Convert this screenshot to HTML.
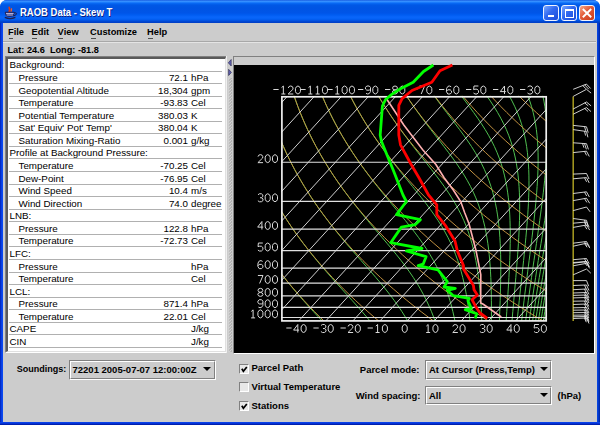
<!DOCTYPE html>
<html><head><meta charset="utf-8">
<style>
*{margin:0;padding:0;box-sizing:border-box}
html,body{width:600px;height:425px;overflow:hidden;background:#fff}
body{position:relative;font-family:"Liberation Sans",sans-serif;}
.abs{position:absolute}
#win{position:absolute;left:0;top:0;width:600px;height:425px;background:#0040d8;border-radius:7px 7px 0 0;overflow:hidden}
#title{position:absolute;left:0;top:0;width:600px;height:23px;
 background:linear-gradient(to bottom,#0a4ad8 0px,#3d95ff 1px,#2a88ff 2px,#0a6cf6 3px,#0058e6 5px,#0054e3 8px,#0055e8 13px,#005df2 15px,#0a66fa 17px,#0462f6 19px,#004edc 21px,#0040c8 22px,#0040c8 23px)}
#ttl{position:absolute;left:20px;top:6px;font-size:10.6px;transform:scaleX(0.895);transform-origin:0 0;font-weight:bold;color:#fff;text-shadow:1px 1px 0 #0a1e80;letter-spacing:0px}
#lframe{position:absolute;left:0;top:23px;width:3px;height:402px;background:linear-gradient(to right,#0020b0 0px,#0636d8 1px,#0a48f0 2px,#0a48f0 3px)}
#rframe{position:absolute;left:596.6px;top:23px;width:3.4px;height:402px;background:linear-gradient(to right,#0848e8,#0030b8 75%,#001a90)}
#bframe{position:absolute;left:0;top:421.8px;width:600px;height:3.2px;background:linear-gradient(to bottom,#0a48f0 0px,#0638e0 1.2px,#0020b0 2.4px,#001898 3.2px)}
#client{position:absolute;left:3px;top:23px;width:594px;height:399px;background:#cccccc}
.menu{position:absolute;top:27px;font-size:9.3px;font-weight:bold;color:#000}
.menu u{text-decoration:none;position:relative}
.menu u:after{content:"";position:absolute;left:0.5px;right:0.5px;top:10.5px;height:1.2px;background:#505050}
.b95{font-size:9.5px;font-weight:bold;color:#000;position:absolute;white-space:nowrap}
#table{position:absolute;left:5px;top:56px;width:222px;height:297px;border-top:1px solid #808080;border-left:1px solid #808080;border-right:1px solid #fff;border-bottom:1px solid #fff}
#table .in{position:absolute;left:0;top:0;right:0;bottom:0;border-top:2px solid #5a5a5a;border-left:2px solid #5a5a5a;border-right:1px solid #e0e0e0;border-bottom:1px solid #e0e0e0;background:#fff;overflow:hidden}
.rows{position:absolute;left:8.5px;top:59px;width:216.5px;height:292px;overflow:hidden}
.row{position:absolute;left:0;width:216px;height:12.57px;font-size:9.8px;color:#000;white-space:nowrap}
.row span{position:absolute;top:1px}
.row .nm{right:36.5px;text-align:right}
.row .un{left:182.5px}
.sep{position:absolute;left:0;width:213px;height:1px;background:#b0b0b0}
.combo{position:absolute;border-top:1px solid #808080;border-left:1px solid #808080;border-right:1px solid #fff;border-bottom:1px solid #fff}
.combo .ci{position:absolute;left:0;top:0;right:0;bottom:0;border-top:1px solid #fff;border-left:1px solid #fff;border-right:1px solid #808080;border-bottom:1px solid #808080}
.arrow{position:absolute;width:0;height:0;border-left:4px solid transparent;border-right:4px solid transparent;border-top:4px solid #000}
.cb{position:absolute;width:10px;height:10px;border-top:1px solid #808080;border-left:1px solid #808080;border-right:1px solid #fff;border-bottom:1px solid #fff;background:#e8e8e8}
.tb{position:absolute;top:4.8px;width:16px;height:16px;border:1px solid #f0f4ff;border-radius:3px}
</style></head><body>
<div id="win">
 <div id="title"></div>
 <div id="ttl">RAOB Data - Skew T</div>
 <!-- java cup icon -->
 <svg class="abs" style="left:0;top:0" width="20" height="22" viewBox="0 0 20 22">
  <path d="M9.6 6.8 C8.2 8.5 11 9.3 9.2 11.2 C8.8 11.7 9.4 12 9.8 12.4" stroke="#e03c10" stroke-width="1.7" fill="none"/>
  <path d="M11.8 8.4 C10.8 9.6 12.2 10.2 10.8 12" stroke="#f06028" stroke-width="1.2" fill="none"/>
  <path d="M5.2 12.2 L14.4 12.2 L13.4 15.8 Q9.8 17.2 6.2 15.8 Z" fill="#3a3a80" stroke="#202050" stroke-width="0.8"/>
  <path d="M6 13.5 L13.6 13.5 M6.6 15 L13 15" stroke="#c8d0f8" stroke-width="0.8"/>
  <path d="M14.4 12.8 Q17.4 12.4 16 14.8 L13.5 16" stroke="#202050" stroke-width="1" fill="none"/>
  <path d="M4.8 17.4 Q10 19.8 15.4 17.4" stroke="#202050" stroke-width="1.2" fill="none"/>
 </svg>
 <div class="tb" style="left:543px;background:linear-gradient(135deg,#7aa8ff,#3068f0 45%,#1a4ad8)"><div class="abs" style="left:3.5px;top:9px;width:6px;height:2.2px;background:#fff"></div></div>
 <div class="tb" style="left:561px;background:linear-gradient(135deg,#7aa8ff,#3068f0 45%,#1a4ad8)"><div class="abs" style="left:3px;top:2.8px;width:9px;height:9px;border:1px solid #fff;border-top-width:2px"></div></div>
 <div class="tb" style="left:579px;background:linear-gradient(135deg,#f8a888,#e25a38 45%,#c83c1c)">
  <svg class="abs" style="left:0;top:0" width="14" height="14"><path d="M2.8 3 L11.2 11.2 M11.2 3 L2.8 11.2" stroke="#fff" stroke-width="1.9"/></svg></div>
 <div id="lframe"></div><div id="rframe"></div><div id="bframe"></div>
 <div id="client"></div>
 <!-- menu -->
 <div class="menu" style="left:8px"><u>F</u>ile</div>
 <div class="menu" style="left:31.5px"><u>E</u>dit</div>
 <div class="menu" style="left:57.5px"><u>V</u>iew</div>
 <div class="menu" style="left:90px"><u>C</u>ustomize</div>
 <div class="menu" style="left:147px"><u>H</u>elp</div>
 <div class="abs" style="left:3px;top:41px;width:593px;height:1px;background:#a8a8a8"></div>
 <div class="abs" style="left:3px;top:42px;width:593px;height:1px;background:#e4e4e4"></div>
 <div class="b95" style="left:7.5px;top:45.4px;font-size:9.2px">Lat: 24.6&nbsp; Long: -81.8</div>
 <!-- table -->
 <div id="table"><div class="in"></div></div>
 <div class="rows">
<div class="row" style="top:-0.57px"><span class="lb" style="left:1px">Background:</span><span class="nm"></span><span class="un"></span></div>
<div class="sep" style="top:11.50px"></div>
<div class="row" style="top:12.00px"><span class="lb" style="left:10px">Pressure</span><span class="nm">72.1</span><span class="un">hPa</span></div>
<div class="sep" style="top:24.07px"></div>
<div class="row" style="top:24.57px"><span class="lb" style="left:10px">Geopotential Altitude</span><span class="nm">18,304</span><span class="un">gpm</span></div>
<div class="sep" style="top:36.64px"></div>
<div class="row" style="top:37.14px"><span class="lb" style="left:10px">Temperature</span><span class="nm">-93.83</span><span class="un">Cel</span></div>
<div class="sep" style="top:49.21px"></div>
<div class="row" style="top:49.71px"><span class="lb" style="left:10px">Potential Temperature</span><span class="nm">380.03</span><span class="un">K</span></div>
<div class="sep" style="top:61.78px"></div>
<div class="row" style="top:62.28px"><span class="lb" style="left:10px">Sat&#39; Equiv&#39; Pot&#39; Temp&#39;</span><span class="nm">380.04</span><span class="un">K</span></div>
<div class="sep" style="top:74.35px"></div>
<div class="row" style="top:74.85px"><span class="lb" style="left:10px">Saturation Mixing-Ratio</span><span class="nm">0.001</span><span class="un">g/kg</span></div>
<div class="sep" style="top:86.92px"></div>
<div class="row" style="top:87.42px"><span class="lb" style="left:1px">Profile at Background Pressure:</span><span class="nm"></span><span class="un"></span></div>
<div class="sep" style="top:99.49px"></div>
<div class="row" style="top:99.99px"><span class="lb" style="left:10px">Temperature</span><span class="nm">-70.25</span><span class="un">Cel</span></div>
<div class="sep" style="top:112.06px"></div>
<div class="row" style="top:112.56px"><span class="lb" style="left:10px">Dew-Point</span><span class="nm">-76.95</span><span class="un">Cel</span></div>
<div class="sep" style="top:124.63px"></div>
<div class="row" style="top:125.13px"><span class="lb" style="left:10px">Wind Speed</span><span class="nm">10.4</span><span class="un">m/s</span></div>
<div class="sep" style="top:137.20px"></div>
<div class="row" style="top:137.70px"><span class="lb" style="left:10px">Wind Direction</span><span class="nm">74.0</span><span class="un">degree</span></div>
<div class="sep" style="top:149.77px"></div>
<div class="row" style="top:150.27px"><span class="lb" style="left:1px">LNB:</span><span class="nm"></span><span class="un"></span></div>
<div class="sep" style="top:162.34px"></div>
<div class="row" style="top:162.84px"><span class="lb" style="left:10px">Pressure</span><span class="nm">122.8</span><span class="un">hPa</span></div>
<div class="sep" style="top:174.91px"></div>
<div class="row" style="top:175.41px"><span class="lb" style="left:10px">Temperature</span><span class="nm">-72.73</span><span class="un">Cel</span></div>
<div class="sep" style="top:187.48px"></div>
<div class="row" style="top:187.98px"><span class="lb" style="left:1px">LFC:</span><span class="nm"></span><span class="un"></span></div>
<div class="sep" style="top:200.05px"></div>
<div class="row" style="top:200.55px"><span class="lb" style="left:10px">Pressure</span><span class="nm"></span><span class="un">hPa</span></div>
<div class="sep" style="top:212.62px"></div>
<div class="row" style="top:213.12px"><span class="lb" style="left:10px">Temperature</span><span class="nm"></span><span class="un">Cel</span></div>
<div class="sep" style="top:225.19px"></div>
<div class="row" style="top:225.69px"><span class="lb" style="left:1px">LCL:</span><span class="nm"></span><span class="un"></span></div>
<div class="sep" style="top:237.76px"></div>
<div class="row" style="top:238.26px"><span class="lb" style="left:10px">Pressure</span><span class="nm">871.4</span><span class="un">hPa</span></div>
<div class="sep" style="top:250.33px"></div>
<div class="row" style="top:250.83px"><span class="lb" style="left:10px">Temperature</span><span class="nm">22.01</span><span class="un">Cel</span></div>
<div class="sep" style="top:262.90px"></div>
<div class="row" style="top:263.40px"><span class="lb" style="left:1px">CAPE</span><span class="nm"></span><span class="un">J/kg</span></div>
<div class="sep" style="top:275.47px"></div>
<div class="row" style="top:275.97px"><span class="lb" style="left:1px">CIN</span><span class="nm"></span><span class="un">J/kg</span></div>
<div class="sep" style="top:288.04px"></div>
 </div>
 <!-- splitter -->
 <svg class="abs" style="left:226px;top:56px" width="8" height="297">
  <defs><pattern id="dots" width="8" height="3" patternUnits="userSpaceOnUse" y="0.5"><path d="M6 0 L2.5 3" stroke="#8a8a8a" stroke-width="0.9"/><path d="M5.5 -0.5 L2 2.5" stroke="#f4f4f4" stroke-width="0.6"/></pattern></defs>
  <rect x="0" y="0" width="1" height="297" fill="#f0f0f0"/>
  <rect x="2" y="22" width="5" height="274" fill="url(#dots)"/>
  <path d="M5.2 3.5 L2.3 6.8 L5.2 10 Z" fill="#6060b0" stroke="#20204a" stroke-width="0.6"/>
  <path d="M2.6 13.3 L5.4 16.4 L2.6 19.5 Z" fill="#6060b0" stroke="#20204a" stroke-width="0.6"/>
 </svg>
 <!-- right panel border -->
 <div class="abs" style="left:233px;top:56px;width:362px;height:298px;border-top:1px solid #808080;border-left:1px solid #808080;border-right:1px solid #fff;border-bottom:1px solid #fff"></div>
<svg width="600" height="425" viewBox="0 0 600 425" style="position:absolute;left:0;top:0">
<defs><clipPath id="bx"><rect x="281.0" y="95.8" width="265.2" height="225.2"/></clipPath></defs>
<rect x="234" y="65" width="360" height="288" fill="#000"/>
<g clip-path="url(#bx)" fill="none">
<path d="M206.86,95.40 L201.65,101.09 L196.44,106.79 L191.24,112.48 L186.03,118.17 L180.82,123.86 L175.61,129.56 L170.41,135.25 L165.20,140.94 L159.99,146.63 L154.79,152.33 L149.58,158.02 L144.37,163.71 L139.16,169.40 L133.96,175.10 L128.75,180.79 L123.54,186.48 L118.34,192.17 L113.13,197.87 L107.92,203.56 L102.72,209.25 L97.51,214.94 L92.30,220.64 L87.09,226.33 L84.69,232.02 L85.21,237.72 L85.83,243.41 L86.55,249.10 L87.37,254.79 L88.29,260.49 L89.32,266.18 L90.45,271.87 L91.69,277.56 L93.04,283.26 L94.50,288.95 L96.08,294.64 L97.77,300.33 L99.58,306.03 L101.50,311.72 L103.55,317.41 L105.73,323.10 M206.86,95.40 L201.65,101.09 L196.44,106.79 L191.24,112.48 L186.03,118.17 L180.82,123.86 L175.61,129.56 L170.41,135.25 L165.20,140.94 L159.99,146.63 L154.79,152.33 L149.58,158.02 L144.37,163.71 L139.16,169.40 L133.96,175.10 L128.75,180.79 L123.54,186.48 L121.01,192.17 L121.53,197.87 L122.15,203.56 L122.86,209.25 L123.68,214.94 L124.60,220.64 L125.62,226.33 L126.75,232.02 L127.99,237.72 L129.34,243.41 L130.80,249.10 L132.37,254.79 L134.06,260.49 L135.87,266.18 L137.79,271.87 L139.84,277.56 L142.01,283.26 L144.30,288.95 L146.73,294.64 L149.28,300.33 L151.96,306.03 L154.78,311.72 L157.74,317.41 L160.84,323.10 M206.86,95.40 L201.65,101.09 L196.44,106.79 L191.24,112.48 L186.03,118.17 L180.82,123.86 L175.61,129.56 L170.41,135.25 L165.20,140.94 L159.99,146.63 L154.79,152.33 L153.63,158.02 L154.17,163.71 L154.81,169.40 L155.55,175.10 L156.39,180.79 L157.34,186.48 L158.39,192.17 L159.54,197.87 L160.81,203.56 L162.18,209.25 L163.67,214.94 L165.27,220.64 L166.99,226.33 L168.82,232.02 L170.78,237.72 L172.85,243.41 L175.05,249.10 L177.38,254.79 L179.83,260.49 L182.42,266.18 L185.13,271.87 L187.99,277.56 L190.98,283.26 L194.10,288.95 L197.37,294.64 L200.79,300.33 L204.35,306.03 L208.06,311.72 L211.92,317.41 L215.93,323.10 M206.86,95.40 L201.65,101.09 L196.44,106.79 L191.24,112.48 L186.03,118.17 L182.86,123.86 L183.37,129.56 L183.97,135.25 L184.68,140.94 L185.48,146.63 L186.39,152.33 L187.41,158.02 L188.52,163.71 L189.75,169.40 L191.08,175.10 L192.53,180.79 L194.09,186.48 L195.77,192.17 L197.56,197.87 L199.47,203.56 L201.50,209.25 L203.66,214.94 L205.94,220.64 L208.35,226.33 L210.89,232.02 L213.56,237.72 L216.36,243.41 L219.30,249.10 L222.38,254.79 L225.60,260.49 L228.96,266.18 L232.47,271.87 L236.13,277.56 L239.93,283.26 L243.88,288.95 L247.99,294.64 L252.25,300.33 L256.66,306.03 L261.22,311.72 L265.94,317.41 L270.79,323.10 M209.77,95.40 L210.30,101.09 L210.92,106.79 L211.64,112.48 L212.46,118.17 L213.38,123.86 L214.41,129.56 L215.55,135.25 L216.79,140.94 L218.14,146.63 L219.61,152.33 L221.18,158.02 L222.88,163.71 L224.69,169.40 L226.62,175.10 L228.67,180.79 L230.84,186.48 L233.15,192.17 L235.57,197.87 L238.13,203.56 L240.82,209.25 L243.65,214.94 L246.61,220.64 L249.71,226.33 L252.95,232.02 L256.34,237.72 L259.87,243.41 L263.54,249.10 L267.37,254.79 L271.34,260.49 L275.47,266.18 L279.74,271.87 L284.17,277.56 L288.74,283.26 L293.45,288.95 L298.30,294.64 L303.27,300.33 L308.36,306.03 L313.55,311.72 L318.81,317.41 L324.12,323.10 M237.83,95.40 L238.83,101.09 L239.93,106.79 L241.15,112.48 L242.47,118.17 L243.91,123.86 L245.46,129.56 L247.12,135.25 L248.90,140.94 L250.80,146.63 L252.82,152.33 L254.96,158.02 L257.23,163.71 L259.63,169.40 L262.15,175.10 L264.81,180.79 L267.60,186.48 L270.52,192.17 L273.59,197.87 L276.79,203.56 L280.14,209.25 L283.63,214.94 L287.27,220.64 L291.05,226.33 L294.98,232.02 L299.06,237.72 L303.29,243.41 L307.66,249.10 L312.18,254.79 L316.83,260.49 L321.62,266.18 L326.51,271.87 L331.51,277.56 L336.59,283.26 L341.72,288.95 L346.87,294.64 L352.02,300.33 L357.11,306.03 L362.12,311.72 L367.01,317.41 L371.74,323.10 M265.88,95.40 L267.36,101.09 L268.95,106.79 L270.66,112.48 L272.49,118.17 L274.43,123.86 L276.50,129.56 L278.69,135.25 L281.01,140.94 L283.46,146.63 L286.03,152.33 L288.74,158.02 L291.58,163.71 L294.56,169.40 L297.68,175.10 L300.94,180.79 L304.34,186.48 L307.89,192.17 L311.58,197.87 L315.42,203.56 L319.40,209.25 L323.53,214.94 L327.81,220.64 L332.22,226.33 L336.77,232.02 L341.44,237.72 L346.22,243.41 L351.10,249.10 L356.05,254.79 L361.04,260.49 L366.04,266.18 L371.01,271.87 L375.92,277.56 L380.73,283.26 L385.39,288.95 L389.87,294.64 L394.15,300.33 L398.20,306.03 L402.01,311.72 L405.59,317.41 L408.92,323.10 M293.93,95.40 L295.89,101.09 L297.97,106.79 L300.17,112.48 L302.50,118.17 L304.96,123.86 L307.54,129.56 L310.26,135.25 L313.12,140.94 L316.11,146.63 L319.24,152.33 L322.51,158.02 L325.92,163.71 L329.48,169.40 L333.18,175.10 L337.03,180.79 L341.02,186.48 L345.16,192.17 L349.43,197.87 L353.84,203.56 L358.37,209.25 L363.01,214.94 L367.74,220.64 L372.55,226.33 L377.41,232.02 L382.27,237.72 L387.11,243.41 L391.88,249.10 L396.54,254.79 L401.05,260.49 L405.38,266.18 L409.49,271.87 L413.37,277.56 L417.00,283.26 L420.38,288.95 L423.51,294.64 L426.40,300.33 L429.06,306.03 L431.50,311.72 L433.74,317.41 L435.79,323.10 M321.99,95.40 L324.42,101.09 L326.99,106.79 L329.68,112.48 L332.51,118.17 L335.48,123.86 L338.58,129.56 L341.83,135.25 L345.22,140.94 L348.75,146.63 L352.42,152.33 L356.24,158.02 L360.19,163.71 L364.29,169.40 L368.53,175.10 L372.89,180.79 L377.37,186.48 L381.95,192.17 L386.61,197.87 L391.33,203.56 L396.07,209.25 L400.80,214.94 L405.47,220.64 L410.04,226.33 L414.48,232.02 L418.74,237.72 L422.78,243.41 L426.59,249.10 L430.14,254.79 L433.44,260.49 L436.48,266.18 L439.27,271.87 L441.81,277.56 L444.13,283.26 L446.24,288.95 L448.15,294.64 L449.89,300.33 L451.47,306.03 L452.90,311.72 L454.20,317.41 L455.38,323.10 M350.04,95.40 L352.95,101.09 L356.00,106.79 L359.19,112.48 L362.51,118.17 L365.98,123.86 L369.59,129.56 L373.35,135.25 L377.24,140.94 L381.27,146.63 L385.44,152.33 L389.73,158.02 L394.13,163.71 L398.63,169.40 L403.20,175.10 L407.82,180.79 L412.44,186.48 L417.04,192.17 L421.57,197.87 L425.99,203.56 L430.24,209.25 L434.30,214.94 L438.13,220.64 L441.71,226.33 L445.02,232.02 L448.07,237.72 L450.86,243.41 L453.39,249.10 L455.68,254.79 L457.74,260.49 L459.60,266.18 L461.26,271.87 L462.76,277.56 L464.09,283.26 L465.29,288.95 L466.35,294.64 L467.31,300.33 L468.16,306.03 L468.92,311.72 L469.60,317.41 L470.21,323.10 M378.08,95.40 L381.46,101.09 L384.98,106.79 L388.65,112.48 L392.45,118.17 L396.39,123.86 L400.46,129.56 L404.65,135.25 L408.96,140.94 L413.36,146.63 L417.83,152.33 L422.35,158.02 L426.88,163.71 L431.37,169.40 L435.79,175.10 L440.08,180.79 L444.21,186.48 L448.13,192.17 L451.81,197.87 L455.24,203.56 L458.39,209.25 L461.27,214.94 L463.89,220.64 L466.24,226.33 L468.35,232.02 L470.23,237.72 L471.91,243.41 L473.39,249.10 L474.70,254.79 L475.85,260.49 L476.87,266.18 L477.75,271.87 L478.53,277.56 L479.20,283.26 L479.78,288.95 L480.28,294.64 L480.71,300.33 L481.08,306.03 L481.40,311.72 L481.66,317.41 L481.89,323.10 M406.07,95.40 L409.90,101.09 L413.85,106.79 L417.93,112.48 L422.12,118.17 L426.42,123.86 L430.79,129.56 L435.20,135.25 L439.64,140.94 L444.04,146.63 L448.38,152.33 L452.60,158.02 L456.65,163.71 L460.50,169.40 L464.10,175.10 L467.45,180.79 L470.52,186.48 L473.31,192.17 L475.82,197.87 L478.07,203.56 L480.07,209.25 L481.84,214.94 L483.39,220.64 L484.75,226.33 L485.93,232.02 L486.95,237.72 L487.83,243.41 L488.58,249.10 L489.21,254.79 L489.74,260.49 L490.18,266.18 L490.53,271.87 L490.82,277.56 L491.04,283.26 L491.20,288.95 L491.32,294.64 L491.39,300.33 L491.43,306.03 L491.44,311.72 L491.42,317.41 L491.38,323.10 M433.86,95.40 L438.03,101.09 L442.28,106.79 L446.60,112.48 L450.94,118.17 L455.28,123.86 L459.56,129.56 L463.73,135.25 L467.76,140.94 L471.59,146.63 L475.18,152.33 L478.51,158.02 L481.57,163.71 L484.34,169.40 L486.82,175.10 L489.03,180.79 L490.99,186.48 L492.70,192.17 L494.19,197.87 L495.48,203.56 L496.58,209.25 L497.51,214.94 L498.30,220.64 L498.95,226.33 L499.48,232.02 L499.90,237.72 L500.23,243.41 L500.47,249.10 L500.64,254.79 L500.74,260.49 L500.78,266.18 L500.77,271.87 L500.71,277.56 L500.62,283.26 L500.49,288.95 L500.34,294.64 L500.16,300.33 L499.96,306.03 L499.75,311.72 L499.52,317.41 L499.28,323.10 M460.98,95.40 L465.25,101.09 L469.48,106.79 L473.64,112.48 L477.67,118.17 L481.52,123.86 L485.16,129.56 L488.54,135.25 L491.64,140.94 L494.46,146.63 L496.98,152.33 L499.22,158.02 L501.19,163.71 L502.91,169.40 L504.39,175.10 L505.66,180.79 L506.73,186.48 L507.62,192.17 L508.36,197.87 L508.95,203.56 L509.41,209.25 L509.76,214.94 L510.01,220.64 L510.16,226.33 L510.24,232.02 L510.25,237.72 L510.19,243.41 L510.08,249.10 L509.91,254.79 L509.71,260.49 L509.47,266.18 L509.20,271.87 L508.90,277.56 L508.58,283.26 L508.24,288.95 L507.88,294.64 L507.52,300.33 L507.14,306.03 L506.77,311.72 L506.38,317.41 L506.00,323.10 M486.48,95.40 L490.38,101.09 L494.09,106.79 L497.57,112.48 L500.78,118.17 L503.71,123.86 L506.34,129.56 L508.67,135.25 L510.72,140.94 L512.51,146.63 L514.04,152.33 L515.34,158.02 L516.43,163.71 L517.32,169.40 L518.05,175.10 L518.62,180.79 L519.05,186.48 L519.36,192.17 L519.56,197.87 L519.66,203.56 L519.67,209.25 L519.61,214.94 L519.48,220.64 L519.28,226.33 L519.03,232.02 L518.74,237.72 L518.41,243.41 L518.04,249.10 L517.63,254.79 L517.21,260.49 L516.76,266.18 L516.29,271.87 L515.81,277.56 L515.32,283.26 L514.82,288.95 L514.32,294.64 L513.81,300.33 L513.31,306.03 L512.80,311.72 L512.30,317.41 L511.81,323.10 M509.00,95.40 L512.09,101.09 L514.88,106.79 L517.38,112.48 L519.57,118.17 L521.48,123.86 L523.13,129.56 L524.52,135.25 L525.68,140.94 L526.63,146.63 L527.39,152.33 L527.98,158.02 L528.42,163.71 L528.73,169.40 L528.91,175.10 L528.98,180.79 L528.96,186.48 L528.85,192.17 L528.66,197.87 L528.41,203.56 L528.10,209.25 L527.74,214.94 L527.33,220.64 L526.87,226.33 L526.39,232.02 L525.87,237.72 L525.33,243.41 L524.77,249.10 L524.19,254.79 L523.60,260.49 L522.99,266.18 L522.38,271.87 L521.76,277.56 L521.14,283.26 L520.51,288.95 L519.89,294.64 L519.28,300.33 L518.67,306.03 L518.07,311.72 L517.47,317.41 L516.89,323.10 M527.70,95.40 L529.80,101.09 L531.62,106.79 L533.16,112.48 L534.45,118.17 L535.51,123.86 L536.36,129.56 L537.02,135.25 L537.51,140.94 L537.85,146.63 L538.05,152.33 L538.13,158.02 L538.10,163.71 L537.97,169.40 L537.76,175.10 L537.47,180.79 L537.12,186.48 L536.71,192.17 L536.24,197.87 L535.73,203.56 L535.17,209.25 L534.59,214.94 L533.97,220.64 L533.32,226.33 L532.66,232.02 L531.98,237.72 L531.28,243.41 L530.57,249.10 L529.85,254.79 L529.12,260.49 L528.40,266.18 L527.67,271.87 L526.94,277.56 L526.22,283.26 L525.50,288.95 L524.78,294.64 L524.08,300.33 L523.39,306.03 L522.71,311.72 L522.04,317.41 L521.39,323.10 M542.70,95.40 L543.92,101.09 L544.92,106.79 L545.70,112.48 L546.28,118.17 L546.70,123.86 L546.96,129.56 L547.08,135.25 L547.08,140.94 L546.97,146.63 L546.76,152.33 L546.46,158.02 L546.09,163.71 L545.65,169.40 L545.14,175.10 L544.59,180.79 L543.99,186.48 L543.35,192.17 L542.67,197.87 L541.96,203.56 L541.22,209.25 L540.46,214.94 L539.69,220.64 L538.89,226.33 L538.09,232.02 L537.27,237.72 L536.45,243.41 L535.63,249.10 L534.80,254.79 L533.97,260.49 L533.15,266.18 L532.33,271.87 L531.51,277.56 L530.71,283.26 L529.91,288.95 L529.12,294.64 L528.35,300.33 L527.59,306.03 L526.85,311.72 L526.12,317.41 L525.41,323.10 M554.69,95.40 L555.23,101.09 L555.59,106.79 L555.80,112.48 L555.86,118.17 L555.80,123.86 L555.63,129.56 L555.35,135.25 L554.99,140.94 L554.54,146.63 L554.03,152.33 L553.45,158.02 L552.82,163.71 L552.14,169.40 L551.42,175.10 L550.66,180.79 L549.87,186.48 L549.05,192.17 L548.21,197.87 L547.35,203.56 L546.47,209.25 L545.58,214.94 L544.68,220.64 L543.77,226.33 L542.85,232.02 L541.93,237.72 L541.01,243.41 L540.09,249.10 L539.18,254.79 L538.27,260.49 L537.37,266.18 L536.47,271.87 L535.59,277.56 L534.71,283.26 L533.85,288.95 L533.01,294.64 L532.18,300.33 L531.36,306.03 L530.57,311.72 L529.79,317.41 L529.04,323.10 M564.40,95.40 L564.43,101.09 L564.33,106.79 L564.11,112.48 L563.78,118.17 L563.36,123.86 L562.86,129.56 L562.29,135.25 L561.65,140.94 L560.96,146.63 L560.21,152.33 L559.43,158.02 L558.60,163.71 L557.73,169.40 L556.84,175.10 L555.93,180.79 L554.99,186.48 L554.03,192.17 L553.06,197.87 L552.08,203.56 L551.08,209.25 L550.09,214.94 L549.08,220.64 L548.08,226.33 L547.07,232.02 L546.07,237.72 L545.07,243.41 L544.08,249.10 L543.09,254.79 L542.11,260.49 L541.14,266.18 L540.19,271.87 L539.25,277.56 L538.32,283.26 L537.40,288.95 L536.51,294.64 L535.63,300.33 L534.77,306.03 L533.93,311.72 L533.12,317.41 L532.32,323.10 M572.43,95.40 L572.07,101.09 L571.62,106.79 L571.08,112.48 L570.46,118.17 L569.77,123.86 L569.02,129.56 L568.22,135.25 L567.38,140.94 L566.49,146.63 L565.56,152.33 L564.61,158.02 L563.62,163.71 L562.62,169.40 L561.59,175.10 L560.55,180.79 L559.49,186.48 L558.42,192.17 L557.35,197.87 L556.27,203.56 L555.18,209.25 L554.10,214.94 L553.01,220.64 L551.93,226.33 L550.85,232.02 L549.78,237.72 L548.71,243.41 L547.66,249.10 L546.61,254.79 L545.58,260.49 L544.56,266.18 L543.55,271.87 L542.56,277.56 L541.59,283.26 L540.63,288.95 L539.69,294.64 L538.77,300.33 L537.87,306.03 L537.00,311.72 L536.15,317.41 L535.32,323.10 M579.19,95.40 L578.53,101.09 L577.81,106.79 L577.02,112.48 L576.18,118.17 L575.28,123.86 L574.34,129.56 L573.37,135.25 L572.35,140.94 L571.31,146.63 L570.25,152.33 L569.16,158.02 L568.05,163.71 L566.93,169.40 L565.79,175.10 L564.65,180.79 L563.50,186.48 L562.34,192.17 L561.18,197.87 L560.02,203.56 L558.86,209.25 L557.70,214.94 L556.55,220.64 L555.40,226.33 L554.26,232.02 L553.13,237.72 L552.01,243.41 L550.90,249.10 L549.81,254.79 L548.73,260.49 L547.66,266.18 L546.61,271.87 L545.58,277.56 L544.56,283.26 L543.57,288.95 L542.60,294.64 L541.64,300.33 L540.71,306.03 L539.81,311.72 L538.93,317.41 L538.07,323.10 M584.97,95.40 L584.09,101.09 L583.16,106.79 L582.18,112.48 L581.16,118.17 L580.10,123.86 L579.00,129.56 L577.88,135.25 L576.74,140.94 L575.58,146.63 L574.39,152.33 L573.20,158.02 L571.99,163.71 L570.77,169.40 L569.55,175.10 L568.32,180.79 L567.09,186.48 L565.86,192.17 L564.63,197.87 L563.40,203.56 L562.18,209.25 L560.96,214.94 L559.75,220.64 L558.55,226.33 L557.36,232.02 L556.18,237.72 L555.01,243.41 L553.86,249.10 L552.72,254.79 L551.60,260.49 L550.50,266.18 L549.41,271.87 L548.34,277.56 L547.30,283.26 L546.27,288.95 L545.27,294.64 L544.28,300.33 L543.33,306.03 L542.39,311.72 L541.49,317.41 L540.60,323.10 M589.99,95.40 L588.93,101.09 L587.83,106.79 L586.70,112.48 L585.54,118.17 L584.34,123.86 L583.13,129.56 L581.90,135.25 L580.64,140.94 L579.38,146.63 L578.10,152.33 L576.82,158.02 L575.53,163.71 L574.23,169.40 L572.93,175.10 L571.63,180.79 L570.34,186.48 L569.04,192.17 L567.75,197.87 L566.47,203.56 L565.19,209.25 L563.92,214.94 L562.67,220.64 L561.42,226.33 L560.19,232.02 L558.97,237.72 L557.76,243.41 L556.57,249.10 L555.40,254.79 L554.24,260.49 L553.10,266.18 L551.99,271.87 L550.89,277.56 L549.81,283.26 L548.76,288.95 L547.73,294.64 L546.72,300.33 L545.74,306.03 L544.78,311.72 L543.85,317.41 L542.95,323.10 M594.40,95.40 L593.20,101.09 L591.97,106.79 L590.71,112.48 L589.43,118.17 L588.13,123.86 L586.82,129.56 L585.49,135.25 L584.15,140.94 L582.80,146.63 L581.44,152.33 L580.09,158.02 L578.72,163.71 L577.36,169.40 L576.00,175.10 L574.65,180.79 L573.29,186.48 L571.94,192.17 L570.60,197.87 L569.27,203.56 L567.95,209.25 L566.64,214.94 L565.34,220.64 L564.06,226.33 L562.79,232.02 L561.53,237.72 L560.29,243.41 L559.07,249.10 L557.86,254.79 L556.68,260.49 L555.51,266.18 L554.37,271.87 L553.24,277.56 L552.14,283.26 L551.06,288.95 L550.01,294.64 L548.98,300.33 L547.98,306.03 L547.00,311.72 L546.05,317.41 L545.13,323.10 M598.32,95.40 L597.00,101.09 L595.66,106.79 L594.30,112.48 L592.93,118.17 L591.54,123.86 L590.14,129.56 L588.73,135.25 L587.32,140.94 L585.90,146.63 L584.48,152.33 L583.06,158.02 L581.64,163.71 L580.22,169.40 L578.81,175.10 L577.40,180.79 L576.00,186.48 L574.60,192.17 L573.22,197.87 L571.85,203.56 L570.49,209.25 L569.14,214.94 L567.81,220.64 L566.49,226.33 L565.18,232.02 L563.90,237.72 L562.63,243.41 L561.38,249.10 L560.14,254.79 L558.93,260.49 L557.74,266.18 L556.57,271.87 L555.43,277.56 L554.30,283.26 L553.21,288.95 L552.13,294.64 L551.08,300.33 L550.06,306.03 L549.07,311.72 L548.10,317.41 L547.16,323.10 M601.84,95.40 L600.42,101.09 L598.99,106.79 L597.55,112.48 L596.09,118.17 L594.63,123.86 L593.15,129.56 L591.68,135.25 L590.20,140.94 L588.72,146.63 L587.25,152.33 L585.77,158.02 L584.30,163.71 L582.84,169.40 L581.38,175.10 L579.93,180.79 L578.49,186.48 L577.05,192.17 L575.63,197.87 L574.23,203.56 L572.83,209.25 L571.45,214.94 L570.09,220.64 L568.74,226.33 L567.41,232.02 L566.09,237.72 L564.80,243.41 L563.52,249.10 L562.26,254.79 L561.03,260.49 L559.82,266.18 L558.63,271.87 L557.46,277.56 L556.32,283.26 L555.20,288.95 L554.11,294.64 L553.05,300.33 L552.01,306.03 L551.00,311.72 L550.02,317.41 L549.07,323.10 M605.01,95.40 L603.52,101.09 L602.01,106.79 L600.49,112.48 L598.97,118.17 L597.44,123.86 L595.91,129.56 L594.38,135.25 L592.84,140.94 L591.32,146.63 L589.79,152.33 L588.27,158.02 L586.76,163.71 L585.25,169.40 L583.75,175.10 L582.26,180.79 L580.79,186.48 L579.32,192.17 L577.87,197.87 L576.43,203.56 L575.00,209.25 L573.60,214.94 L572.20,220.64 L570.83,226.33 L569.47,232.02 L568.13,237.72 L566.82,243.41 L565.52,249.10 L564.24,254.79 L562.99,260.49 L561.76,266.18 L560.55,271.87 L559.36,277.56 L558.21,283.26 L557.07,288.95 L555.97,294.64 L554.89,300.33 L553.83,306.03 L552.81,311.72 L551.81,317.41 L550.85,323.10 M607.90,95.40 L606.33,101.09 L604.76,106.79 L603.18,112.48 L601.60,118.17 L600.02,123.86 L598.43,129.56 L596.85,135.25 L595.28,140.94 L593.70,146.63 L592.14,152.33 L590.58,158.02 L589.02,163.71 L587.48,169.40 L585.95,175.10 L584.43,180.79 L582.92,186.48 L581.43,192.17 L579.94,197.87 L578.48,203.56 L577.03,209.25 L575.59,214.94 L574.18,220.64 L572.78,226.33 L571.40,232.02 L570.04,237.72 L568.70,243.41 L567.39,249.10 L566.09,254.79 L564.82,260.49 L563.57,266.18 L562.35,271.87 L561.15,277.56 L559.97,283.26 L558.83,288.95 L557.71,294.64 L556.61,300.33 L555.55,306.03 L554.51,311.72 L553.50,317.41 L552.53,323.10 M610.54,95.40 L608.92,101.09 L607.29,106.79 L605.66,112.48 L604.02,118.17 L602.39,123.86 L600.77,129.56 L599.14,135.25 L597.53,140.94 L595.91,146.63 L594.31,152.33 L592.72,158.02 L591.13,163.71 L589.56,169.40 L587.99,175.10 L586.44,180.79 L584.91,186.48 L583.39,192.17 L581.88,197.87 L580.39,203.56 L578.92,209.25 L577.46,214.94 L576.02,220.64 L574.61,226.33 L573.21,232.02 L571.83,237.72 L570.47,243.41 L569.14,249.10 L567.83,254.79 L566.54,260.49 L565.28,266.18 L564.04,271.87 L562.82,277.56 L561.64,283.26 L560.48,288.95 L559.34,294.64 L558.24,300.33 L557.16,306.03 L556.11,311.72 L555.10,317.41 L554.11,323.10" stroke="#50c050" stroke-width="1"/>
<path d="M97.55,95.40 L96.17,101.09 L94.85,106.79 L93.59,112.48 L92.40,118.17 L91.28,123.86 L90.23,129.56 L89.25,135.25 L88.35,140.94 L87.51,146.63 L86.75,152.33 L86.07,158.02 L85.46,163.71 L84.93,169.40 L84.49,175.10 L84.12,180.79 L83.83,186.48 L83.63,192.17 L83.51,197.87 L83.48,203.56 L83.54,209.25 L83.69,214.94 L83.93,220.64 L84.26,226.33 L84.69,232.02 L85.21,237.72 L85.83,243.41 L86.55,249.10 L87.37,254.79 L88.29,260.49 L89.32,266.18 L90.45,271.87 L91.69,277.56 L93.04,283.26 L94.50,288.95 L96.08,294.64 L97.77,300.33 L99.58,306.03 L101.50,311.72 L103.55,317.41 L105.73,323.10 M125.61,95.40 L124.70,101.09 L123.86,106.79 L123.10,112.48 L122.42,118.17 L121.81,123.86 L121.28,129.56 L120.83,135.25 L120.46,140.94 L120.17,146.63 L119.97,152.33 L119.85,158.02 L119.82,163.71 L119.87,169.40 L120.02,175.10 L120.26,180.79 L120.59,186.48 L121.01,192.17 L121.53,197.87 L122.15,203.56 L122.86,209.25 L123.68,214.94 L124.60,220.64 L125.62,226.33 L126.75,232.02 L127.99,237.72 L129.34,243.41 L130.80,249.10 L132.37,254.79 L134.06,260.49 L135.87,266.18 L137.79,271.87 L139.84,277.56 L142.01,283.26 L144.30,288.95 L146.73,294.64 L149.28,300.33 L151.96,306.03 L154.78,311.72 L157.74,317.41 L160.84,323.10 M153.66,95.40 L153.23,101.09 L152.88,106.79 L152.61,112.48 L152.43,118.17 L152.33,123.86 L152.32,129.56 L152.40,135.25 L152.57,140.94 L152.83,146.63 L153.18,152.33 L153.63,158.02 L154.17,163.71 L154.81,169.40 L155.55,175.10 L156.39,180.79 L157.34,186.48 L158.39,192.17 L159.54,197.87 L160.81,203.56 L162.18,209.25 L163.67,214.94 L165.27,220.64 L166.99,226.33 L168.82,232.02 L170.78,237.72 L172.85,243.41 L175.05,249.10 L177.38,254.79 L179.83,260.49 L182.42,266.18 L185.13,271.87 L187.99,277.56 L190.98,283.26 L194.11,288.95 L197.38,294.64 L200.79,300.33 L204.35,306.03 L208.07,311.72 L211.93,317.41 L215.95,323.10 M181.72,95.40 L181.76,101.09 L181.90,106.79 L182.13,112.48 L182.45,118.17 L182.86,123.86 L183.37,129.56 L183.97,135.25 L184.68,140.94 L185.48,146.63 L186.39,152.33 L187.41,158.02 L188.52,163.71 L189.75,169.40 L191.08,175.10 L192.53,180.79 L194.09,186.48 L195.77,192.17 L197.56,197.87 L199.47,203.56 L201.50,209.25 L203.66,214.94 L205.94,220.64 L208.35,226.33 L210.89,232.02 L213.56,237.72 L216.36,243.41 L219.30,249.10 L222.38,254.79 L225.60,260.49 L228.97,266.18 L232.48,271.87 L236.14,277.56 L239.95,283.26 L243.91,288.95 L248.03,294.64 L252.30,300.33 L256.74,306.03 L261.35,311.72 L266.12,317.41 L271.06,323.10 M209.77,95.40 L210.30,101.09 L210.92,106.79 L211.64,112.48 L212.46,118.17 L213.38,123.86 L214.41,129.56 L215.55,135.25 L216.79,140.94 L218.14,146.63 L219.61,152.33 L221.18,158.02 L222.88,163.71 L224.69,169.40 L226.62,175.10 L228.67,180.79 L230.84,186.48 L233.15,192.17 L235.57,197.87 L238.13,203.56 L240.82,209.25 L243.65,214.94 L246.61,220.64 L249.71,226.33 L252.96,232.02 L256.34,237.72 L259.87,243.41 L263.56,249.10 L267.39,254.79 L271.38,260.49 L275.52,266.18 L279.82,271.87 L284.29,277.56 L288.91,283.26 L293.71,288.95 L298.68,294.64 L303.82,300.33 L309.13,306.03 L314.63,311.72 L320.31,317.41 L326.17,323.10 M237.83,95.40 L238.83,101.09 L239.93,106.79 L241.15,112.48 L242.47,118.17 L243.91,123.86 L245.46,129.56 L247.12,135.25 L248.90,140.94 L250.80,146.63 L252.82,152.33 L254.96,158.02 L257.23,163.71 L259.63,169.40 L262.15,175.10 L264.81,180.79 L267.60,186.48 L270.52,192.17 L273.59,197.87 L276.80,203.56 L280.14,209.25 L283.64,214.94 L287.28,220.64 L291.08,226.33 L295.02,232.02 L299.12,237.72 L303.39,243.41 L307.81,249.10 L312.39,254.79 L317.15,260.49 L322.07,266.18 L327.16,271.87 L332.43,277.56 L337.88,283.26 L343.51,288.95 L349.33,294.64 L355.33,300.33 L361.52,306.03 L367.91,311.72 L374.49,317.41 L381.28,323.10 M265.88,95.40 L267.36,101.09 L268.95,106.79 L270.66,112.48 L272.49,118.17 L274.43,123.86 L276.50,129.56 L278.69,135.25 L281.01,140.94 L283.46,146.63 L286.03,152.33 L288.74,158.02 L291.58,163.71 L294.56,169.40 L297.68,175.10 L300.95,180.79 L304.35,186.48 L307.90,192.17 L311.60,197.87 L315.46,203.56 L319.46,209.25 L323.63,214.94 L327.95,220.64 L332.44,226.33 L337.09,232.02 L341.91,237.72 L346.90,243.41 L352.06,249.10 L357.40,254.79 L362.92,260.49 L368.62,266.18 L374.51,271.87 L380.58,277.56 L386.85,283.26 L393.32,288.95 L399.98,294.64 L406.84,300.33 L413.91,306.03 L421.19,311.72 L428.68,317.41 L436.39,323.10 M293.93,95.40 L295.89,101.09 L297.97,106.79 L300.17,112.48 L302.50,118.17 L304.96,123.86 L307.55,129.56 L310.27,135.25 L313.12,140.94 L316.11,146.63 L319.25,152.33 L322.52,158.02 L325.94,163.71 L329.50,169.40 L333.22,175.10 L337.08,180.79 L341.10,186.48 L345.28,192.17 L349.62,197.87 L354.12,203.56 L358.79,209.25 L363.62,214.94 L368.62,220.64 L373.80,226.33 L379.16,232.02 L384.69,237.72 L390.41,243.41 L396.31,249.10 L402.41,254.79 L408.69,260.49 L415.17,266.18 L421.85,271.87 L428.73,277.56 L435.82,283.26 L443.12,288.95 L450.63,294.64 L458.35,300.33 L466.30,306.03 L474.47,311.72 L482.87,317.41 L491.50,323.10 M321.99,95.40 L324.42,101.09 L326.99,106.79 L329.68,112.48 L332.51,118.17 L335.48,123.86 L338.59,129.56 L341.84,135.25 L345.23,140.94 L348.77,146.63 L352.46,152.33 L356.30,158.02 L360.29,163.71 L364.44,169.40 L368.75,175.10 L373.22,180.79 L377.86,186.48 L382.66,192.17 L387.63,197.87 L392.78,203.56 L398.11,209.25 L403.61,214.94 L409.29,220.64 L415.16,226.33 L421.22,232.02 L427.47,237.72 L433.92,243.41 L440.56,249.10 L447.41,254.79 L454.46,260.49 L461.72,266.18 L469.19,271.87 L476.88,277.56 L484.79,283.26 L492.92,288.95 L501.28,294.64 L509.87,300.33 L518.69,306.03 L527.75,311.72 L537.06,317.41 L546.61,323.10 M350.04,95.40 L352.95,101.09 L356.00,106.79 L359.20,112.48 L362.53,118.17 L366.01,123.86 L369.63,129.56 L373.41,135.25 L377.34,140.94 L381.43,146.63 L385.67,152.33 L390.08,158.02 L394.64,163.71 L399.38,169.40 L404.28,175.10 L409.36,180.79 L414.61,186.48 L420.04,192.17 L425.65,197.87 L431.44,203.56 L437.43,209.25 L443.60,214.94 L449.96,220.64 L456.53,226.33 L463.29,232.02 L470.26,237.72 L477.43,243.41 L484.82,249.10 L492.42,254.79 L500.23,260.49 L508.27,266.18 L516.54,271.87 L525.03,277.56 L533.76,283.26 L542.72,288.95 L551.93,294.64 L561.38,300.33 L571.08,306.03 L581.03,311.72 L591.25,317.41 L601.72,323.10 M378.10,95.40 L381.49,101.09 L385.02,106.79 L388.71,112.48 L392.54,118.17 L396.53,123.86 L400.68,129.56 L404.98,135.25 L409.45,140.94 L414.08,146.63 L418.88,152.33 L423.85,158.02 L429.00,163.71 L434.32,169.40 L439.82,175.10 L445.50,180.79 L451.36,186.48 L457.42,192.17 L463.67,197.87 L470.11,203.56 L476.75,209.25 L483.59,214.94 L490.63,220.64 L497.89,226.33 L505.36,232.02 L513.04,237.72 L520.94,243.41 L529.07,249.10 L537.42,254.79 L546.01,260.49 L554.82,266.18 L563.88,271.87 L573.18,277.56 L582.73,283.26 L592.53,288.95 L602.58,294.64 L612.89,300.33 L623.47,306.03 L634.32,311.72 L645.44,317.41 L656.83,323.10 M406.15,95.40 L410.02,101.09 L414.04,106.79 L418.22,112.48 L422.56,118.17 L427.06,123.86 L431.72,129.56 L436.56,135.25 L441.56,140.94 L446.74,146.63 L452.10,152.33 L457.63,158.02 L463.35,163.71 L469.26,169.40 L475.35,175.10 L481.64,180.79 L488.12,186.48 L494.80,192.17 L501.68,197.87 L508.77,203.56 L516.07,209.25 L523.58,214.94 L531.31,220.64 L539.25,226.33 L547.42,232.02 L555.82,237.72 L564.45,243.41 L573.32,249.10 L582.43,254.79 L591.78,260.49 L601.37,266.18 L611.22,271.87 L621.33,277.56 L631.70,283.26 L642.33,288.95 L653.23,294.64 L664.41,300.33 L675.86,306.03 L687.60,311.72 L699.62,317.41 L711.94,323.10 M434.21,95.40 L438.55,101.09 L443.06,106.79 L447.73,112.48 L452.57,118.17 L457.58,123.86 L462.77,129.56 L468.13,135.25 L473.67,140.94 L479.40,146.63 L485.31,152.33 L491.41,158.02 L497.70,163.71 L504.19,169.40 L510.88,175.10 L517.77,180.79 L524.87,186.48 L532.18,192.17 L539.70,197.87 L547.43,203.56 L555.39,209.25 L563.57,214.94 L571.98,220.64 L580.62,226.33 L589.49,232.02 L598.61,237.72 L607.97,243.41 L617.57,249.10 L627.43,254.79 L637.55,260.49 L647.93,266.18 L658.57,271.87 L669.48,277.56 L680.67,283.26 L692.13,288.95 L703.88,294.64 L715.92,300.33 L728.25,306.03 L740.88,311.72 L753.81,317.41 L767.05,323.10 M462.26,95.40 L467.08,101.09 L472.07,106.79 L477.24,112.48 L482.58,118.17 L488.11,123.86 L493.81,129.56 L499.70,135.25 L505.78,140.94 L512.06,146.63 L518.52,152.33 L525.19,158.02 L532.06,163.71 L539.13,169.40 L546.42,175.10 L553.91,180.79 L561.62,186.48 L569.55,192.17 L577.71,197.87 L586.09,203.56 L594.71,209.25 L603.56,214.94 L612.65,220.64 L621.98,226.33 L631.56,232.02 L641.39,237.72 L651.48,243.41 L661.83,249.10 L672.44,254.79 L683.32,260.49 L694.48,266.18 L705.91,271.87 L717.63,277.56 L729.63,283.26 L741.93,288.95 L754.53,294.64 L767.43,300.33 L780.64,306.03 L794.16,311.72 L808.00,317.41 L822.17,323.10 M490.31,95.40 L495.61,101.09 L501.09,106.79 L506.75,112.48 L512.60,118.17 L518.63,123.86 L524.86,129.56 L531.28,135.25 L537.89,140.94 L544.71,146.63 L551.74,152.33 L558.97,158.02 L566.41,163.71 L574.07,169.40 L581.95,175.10 L590.05,180.79 L598.38,186.48 L606.93,192.17 L615.73,197.87 L624.76,203.56 L634.03,209.25 L643.55,214.94 L653.32,220.64 L663.34,226.33 L673.63,232.02 L684.17,237.72 L694.99,243.41 L706.08,249.10 L717.44,254.79 L729.09,260.49 L741.03,266.18 L753.25,271.87 L765.78,277.56 L778.60,283.26 L791.74,288.95 L805.18,294.64 L818.94,300.33 L833.03,306.03 L847.44,311.72 L862.19,317.41 L877.28,323.10 M518.37,95.40 L524.15,101.09 L530.11,106.79 L536.26,112.48 L542.61,118.17 L549.16,123.86 L555.90,129.56 L562.85,135.25 L570.00,140.94 L577.37,146.63 L584.95,152.33 L592.75,158.02 L600.77,163.71 L609.01,169.40 L617.48,175.10 L626.19,180.79 L635.13,186.48 L644.31,192.17 L653.74,197.87 L663.42,203.56 L673.35,209.25 L683.54,214.94 L693.99,220.64 L704.70,226.33 L715.69,232.02 L726.96,237.72 L738.50,243.41 L750.33,249.10 L762.45,254.79 L774.86,260.49 L787.58,266.18 L800.60,271.87 L813.93,277.56 L827.57,283.26 L841.54,288.95 L855.83,294.64 L870.46,300.33 L885.42,306.03 L900.72,311.72 L916.38,317.41 L932.39,323.10 M546.42,95.40 L552.68,101.09 L559.13,106.79 L565.78,112.48 L572.63,118.17 L579.68,123.86 L586.95,129.56 L594.42,135.25 L602.12,140.94 L610.03,146.63 L618.16,152.33 L626.53,158.02 L635.12,163.71 L643.95,169.40 L653.01,175.10 L662.32,180.79 L671.88,186.48 L681.69,192.17 L691.76,197.87 L702.08,203.56 L712.67,209.25 L723.53,214.94 L734.66,220.64 L746.07,226.33 L757.76,232.02 L769.74,237.72 L782.01,243.41 L794.58,249.10 L807.45,254.79 L820.64,260.49 L834.13,266.18 L847.94,271.87 L862.08,277.56 L876.54,283.26 L891.34,288.95 L906.48,294.64 L921.97,300.33 L937.81,306.03 L954.00,311.72 L970.57,317.41 L987.50,323.10 M574.48,95.40 L581.21,101.09 L588.15,106.79 L595.29,112.48 L602.64,118.17 L610.21,123.86 L617.99,129.56 L626.00,135.25 L634.23,140.94 L642.68,146.63 L651.38,152.33 L660.30,158.02 L669.47,163.71 L678.89,169.40 L688.55,175.10 L698.46,180.79 L708.64,186.48 L719.07,192.17 L729.77,197.87 L740.74,203.56 L751.99,209.25 L763.52,214.94 L775.33,220.64 L787.43,226.33 L799.83,232.02 L812.52,237.72 L825.52,243.41 L838.83,249.10 L852.46,254.79 L866.41,260.49 L880.68,266.18 L895.28,271.87 L910.23,277.56 L925.51,283.26 L941.14,288.95 L957.13,294.64 L973.48,300.33 L990.20,306.03 L1007.29,311.72 L1024.75,317.41 L1042.61,323.10" stroke="#c09040" stroke-width="1"/>
<path d="M-135.00,321.00 L70.99,95.80 M-107.90,321.00 L98.09,95.80 M-80.80,321.00 L125.19,95.80 M-53.70,321.00 L152.29,95.80 M-26.60,321.00 L179.39,95.80 M0.50,321.00 L206.49,95.80 M27.60,321.00 L233.59,95.80 M54.70,321.00 L260.69,95.80 M81.80,321.00 L287.79,95.80 M108.90,321.00 L314.89,95.80 M136.00,321.00 L341.99,95.80 M163.10,321.00 L369.09,95.80 M190.20,321.00 L396.19,95.80 M217.30,321.00 L423.29,95.80 M244.40,321.00 L450.39,95.80 M271.50,321.00 L477.49,95.80 M298.60,321.00 L504.59,95.80 M325.70,321.00 L531.69,95.80 M352.80,321.00 L558.79,95.80 M379.90,321.00 L585.89,95.80 M407.00,321.00 L612.99,95.80 M434.10,321.00 L640.09,95.80 M461.20,321.00 L667.19,95.80 M488.30,321.00 L694.29,95.80 M515.40,321.00 L721.39,95.80 M542.50,321.00 L748.49,95.80" stroke="#cfcfcf" stroke-width="1"/>
<path d="M281.0,162.25 L546.2,162.25 M281.0,201.36 L546.2,201.36 M281.0,229.11 L546.2,229.11 M281.0,250.63 L546.2,250.63 M281.0,268.22 L546.2,268.22 M281.0,283.08 L546.2,283.08 M281.0,295.96 L546.2,295.96 M281.0,307.32 L546.2,307.32 M281.0,317.48 L546.2,317.48" stroke="#e0e0e0" stroke-width="1.2"/>
</g>
<rect x="281.9" y="96.8" width="264.3" height="224.1" fill="none" stroke="#f0f0f0" stroke-width="1.7"/>
<path d="M273.35,89.50 L278.65,89.50 M281.55,87.60 L283.35,86.00 L283.35,94.00 M281.35,94.00 L285.35,94.00 M288.25,88.00 L289.05,86.50 L290.65,86.00 L292.25,86.50 L293.05,88.00 L292.85,89.40 L288.15,94.00 L293.25,94.00 M297.95,86.00 L299.55,86.80 L300.45,88.50 L300.45,91.50 L299.55,93.20 L297.95,94.00 L296.35,93.20 L295.45,91.50 L295.45,88.50 L296.35,86.80 Z M300.35,89.50 L305.65,89.50 M308.55,87.60 L310.35,86.00 L310.35,94.00 M308.35,94.00 L312.35,94.00 M315.85,87.60 L317.65,86.00 L317.65,94.00 M315.65,94.00 L319.65,94.00 M324.95,86.00 L326.55,86.80 L327.45,88.50 L327.45,91.50 L326.55,93.20 L324.95,94.00 L323.35,93.20 L322.45,91.50 L322.45,88.50 L323.35,86.80 Z M327.35,89.50 L332.65,89.50 M335.55,87.60 L337.35,86.00 L337.35,94.00 M335.35,94.00 L339.35,94.00 M344.65,86.00 L346.25,86.80 L347.15,88.50 L347.15,91.50 L346.25,93.20 L344.65,94.00 L343.05,93.20 L342.15,91.50 L342.15,88.50 L343.05,86.80 Z M351.95,86.00 L353.55,86.80 L354.45,88.50 L354.45,91.50 L353.55,93.20 L351.95,94.00 L350.35,93.20 L349.45,91.50 L349.45,88.50 L350.35,86.80 Z M358.00,89.50 L363.30,89.50 M370.50,89.20 L369.20,90.20 L366.80,90.20 L365.50,89.00 L365.50,87.40 L366.80,86.00 L369.20,86.00 L370.50,87.40 L370.50,91.60 L369.20,93.60 L367.60,94.00 L366.00,93.40 M375.30,86.00 L376.90,86.80 L377.80,88.50 L377.80,91.50 L376.90,93.20 L375.30,94.00 L373.70,93.20 L372.80,91.50 L372.80,88.50 L373.70,86.80 Z M385.00,89.50 L390.30,89.50 M395.00,86.00 L393.20,86.50 L392.60,88.00 L393.20,89.40 L395.00,90.00 L396.80,90.60 L397.60,92.00 L396.80,93.50 L395.00,94.00 L393.20,93.50 L392.40,92.00 L393.20,90.60 L395.00,90.00 L396.80,89.40 L397.40,88.00 L396.80,86.50 Z M402.30,86.00 L403.90,86.80 L404.80,88.50 L404.80,91.50 L403.90,93.20 L402.30,94.00 L400.70,93.20 L399.80,91.50 L399.80,88.50 L400.70,86.80 Z M412.00,89.50 L417.30,89.50 M419.50,86.00 L424.60,86.00 L421.20,94.00 M429.30,86.00 L430.90,86.80 L431.80,88.50 L431.80,91.50 L430.90,93.20 L429.30,94.00 L427.70,93.20 L426.80,91.50 L426.80,88.50 L427.70,86.80 Z M439.00,89.50 L444.30,89.50 M451.20,86.80 L449.60,86.00 L448.00,86.30 L446.60,88.40 L446.50,91.80 L447.80,94.00 L450.20,94.00 L451.50,92.60 L451.50,91.00 L450.20,89.80 L447.80,89.80 L446.50,91.20 M456.30,86.00 L457.90,86.80 L458.80,88.50 L458.80,91.50 L457.90,93.20 L456.30,94.00 L454.70,93.20 L453.80,91.50 L453.80,88.50 L454.70,86.80 Z M466.00,89.50 L471.30,89.50 M478.40,86.00 L474.00,86.00 L473.60,89.60 L475.00,89.20 L477.00,89.20 L478.50,90.60 L478.50,92.60 L477.00,94.00 L475.00,94.00 L473.50,93.00 M483.30,86.00 L484.90,86.80 L485.80,88.50 L485.80,91.50 L484.90,93.20 L483.30,94.00 L481.70,93.20 L480.80,91.50 L480.80,88.50 L481.70,86.80 Z M493.00,89.50 L498.30,89.50 M504.50,94.00 L504.50,86.00 L500.30,91.60 L505.80,91.60 M510.30,86.00 L511.90,86.80 L512.80,88.50 L512.80,91.50 L511.90,93.20 L510.30,94.00 L508.70,93.20 L507.80,91.50 L507.80,88.50 L508.70,86.80 Z M520.00,89.50 L525.30,89.50 M527.60,87.00 L529.00,86.00 L531.00,86.00 L532.40,87.20 L532.40,88.80 L531.00,90.00 L529.60,90.00 M531.00,90.00 L532.60,91.20 L532.60,92.80 L531.00,94.00 L529.00,94.00 L527.50,93.00 M537.30,86.00 L538.90,86.80 L539.80,88.50 L539.80,91.50 L538.90,93.20 L537.30,94.00 L535.70,93.20 L534.80,91.50 L534.80,88.50 L535.70,86.80 Z M286.30,328.00 L291.60,328.00 M297.80,332.50 L297.80,324.50 L293.60,330.10 L299.10,330.10 M303.60,324.50 L305.20,325.30 L306.10,327.00 L306.10,330.00 L305.20,331.70 L303.60,332.50 L302.00,331.70 L301.10,330.00 L301.10,327.00 L302.00,325.30 Z M313.40,328.00 L318.70,328.00 M321.00,325.50 L322.40,324.50 L324.40,324.50 L325.80,325.70 L325.80,327.30 L324.40,328.50 L323.00,328.50 M324.40,328.50 L326.00,329.70 L326.00,331.30 L324.40,332.50 L322.40,332.50 L320.90,331.50 M330.70,324.50 L332.30,325.30 L333.20,327.00 L333.20,330.00 L332.30,331.70 L330.70,332.50 L329.10,331.70 L328.20,330.00 L328.20,327.00 L329.10,325.30 Z M340.50,328.00 L345.80,328.00 M348.10,326.50 L348.90,325.00 L350.50,324.50 L352.10,325.00 L352.90,326.50 L352.70,327.90 L348.00,332.50 L353.10,332.50 M357.80,324.50 L359.40,325.30 L360.30,327.00 L360.30,330.00 L359.40,331.70 L357.80,332.50 L356.20,331.70 L355.30,330.00 L355.30,327.00 L356.20,325.30 Z M367.60,328.00 L372.90,328.00 M375.80,326.10 L377.60,324.50 L377.60,332.50 M375.60,332.50 L379.60,332.50 M384.90,324.50 L386.50,325.30 L387.40,327.00 L387.40,330.00 L386.50,331.70 L384.90,332.50 L383.30,331.70 L382.40,330.00 L382.40,327.00 L383.30,325.30 Z M404.70,324.50 L406.30,325.30 L407.20,327.00 L407.20,330.00 L406.30,331.70 L404.70,332.50 L403.10,331.70 L402.20,330.00 L402.20,327.00 L403.10,325.30 Z M426.35,326.10 L428.15,324.50 L428.15,332.50 M426.15,332.50 L430.15,332.50 M435.45,324.50 L437.05,325.30 L437.95,327.00 L437.95,330.00 L437.05,331.70 L435.45,332.50 L433.85,331.70 L432.95,330.00 L432.95,327.00 L433.85,325.30 Z M452.85,326.50 L453.65,325.00 L455.25,324.50 L456.85,325.00 L457.65,326.50 L457.45,327.90 L452.75,332.50 L457.85,332.50 M462.55,324.50 L464.15,325.30 L465.05,327.00 L465.05,330.00 L464.15,331.70 L462.55,332.50 L460.95,331.70 L460.05,330.00 L460.05,327.00 L460.95,325.30 Z M479.95,325.50 L481.35,324.50 L483.35,324.50 L484.75,325.70 L484.75,327.30 L483.35,328.50 L481.95,328.50 M483.35,328.50 L484.95,329.70 L484.95,331.30 L483.35,332.50 L481.35,332.50 L479.85,331.50 M489.65,324.50 L491.25,325.30 L492.15,327.00 L492.15,330.00 L491.25,331.70 L489.65,332.50 L488.05,331.70 L487.15,330.00 L487.15,327.00 L488.05,325.30 Z M510.95,332.50 L510.95,324.50 L506.75,330.10 L512.25,330.10 M516.75,324.50 L518.35,325.30 L519.25,327.00 L519.25,330.00 L518.35,331.70 L516.75,332.50 L515.15,331.70 L514.25,330.00 L514.25,327.00 L515.15,325.30 Z M538.95,324.50 L534.55,324.50 L534.15,328.10 L535.55,327.70 L537.55,327.70 L539.05,329.10 L539.05,331.10 L537.55,332.50 L535.55,332.50 L534.05,331.50 M543.85,324.50 L545.45,325.30 L546.35,327.00 L546.35,330.00 L545.45,331.70 L543.85,332.50 L542.25,331.70 L541.35,330.00 L541.35,327.00 L542.25,325.30 Z M258.00,156.65 L258.80,155.15 L260.40,154.65 L262.00,155.15 L262.80,156.65 L262.60,158.05 L257.90,162.65 L263.00,162.65 M267.70,154.65 L269.30,155.45 L270.20,157.15 L270.20,160.15 L269.30,161.85 L267.70,162.65 L266.10,161.85 L265.20,160.15 L265.20,157.15 L266.10,155.45 Z M275.00,154.65 L276.60,155.45 L277.50,157.15 L277.50,160.15 L276.60,161.85 L275.00,162.65 L273.40,161.85 L272.50,160.15 L272.50,157.15 L273.40,155.45 Z M258.00,194.76 L259.40,193.76 L261.40,193.76 L262.80,194.96 L262.80,196.56 L261.40,197.76 L260.00,197.76 M261.40,197.76 L263.00,198.96 L263.00,200.56 L261.40,201.76 L259.40,201.76 L257.90,200.76 M267.70,193.76 L269.30,194.56 L270.20,196.26 L270.20,199.26 L269.30,200.96 L267.70,201.76 L266.10,200.96 L265.20,199.26 L265.20,196.26 L266.10,194.56 Z M275.00,193.76 L276.60,194.56 L277.50,196.26 L277.50,199.26 L276.60,200.96 L275.00,201.76 L273.40,200.96 L272.50,199.26 L272.50,196.26 L273.40,194.56 Z M261.90,229.51 L261.90,221.51 L257.70,227.11 L263.20,227.11 M267.70,221.51 L269.30,222.31 L270.20,224.01 L270.20,227.01 L269.30,228.71 L267.70,229.51 L266.10,228.71 L265.20,227.01 L265.20,224.01 L266.10,222.31 Z M275.00,221.51 L276.60,222.31 L277.50,224.01 L277.50,227.01 L276.60,228.71 L275.00,229.51 L273.40,228.71 L272.50,227.01 L272.50,224.01 L273.40,222.31 Z M262.80,243.03 L258.40,243.03 L258.00,246.63 L259.40,246.23 L261.40,246.23 L262.90,247.63 L262.90,249.63 L261.40,251.03 L259.40,251.03 L257.90,250.03 M267.70,243.03 L269.30,243.83 L270.20,245.53 L270.20,248.53 L269.30,250.23 L267.70,251.03 L266.10,250.23 L265.20,248.53 L265.20,245.53 L266.10,243.83 Z M275.00,243.03 L276.60,243.83 L277.50,245.53 L277.50,248.53 L276.60,250.23 L275.00,251.03 L273.40,250.23 L272.50,248.53 L272.50,245.53 L273.40,243.83 Z M262.60,261.42 L261.00,260.62 L259.40,260.92 L258.00,263.02 L257.90,266.42 L259.20,268.62 L261.60,268.62 L262.90,267.22 L262.90,265.62 L261.60,264.42 L259.20,264.42 L257.90,265.82 M267.70,260.62 L269.30,261.42 L270.20,263.12 L270.20,266.12 L269.30,267.82 L267.70,268.62 L266.10,267.82 L265.20,266.12 L265.20,263.12 L266.10,261.42 Z M275.00,260.62 L276.60,261.42 L277.50,263.12 L277.50,266.12 L276.60,267.82 L275.00,268.62 L273.40,267.82 L272.50,266.12 L272.50,263.12 L273.40,261.42 Z M257.90,275.48 L263.00,275.48 L259.60,283.48 M267.70,275.48 L269.30,276.28 L270.20,277.98 L270.20,280.98 L269.30,282.68 L267.70,283.48 L266.10,282.68 L265.20,280.98 L265.20,277.98 L266.10,276.28 Z M275.00,275.48 L276.60,276.28 L277.50,277.98 L277.50,280.98 L276.60,282.68 L275.00,283.48 L273.40,282.68 L272.50,280.98 L272.50,277.98 L273.40,276.28 Z M260.40,288.36 L258.60,288.86 L258.00,290.36 L258.60,291.76 L260.40,292.36 L262.20,292.96 L263.00,294.36 L262.20,295.86 L260.40,296.36 L258.60,295.86 L257.80,294.36 L258.60,292.96 L260.40,292.36 L262.20,291.76 L262.80,290.36 L262.20,288.86 Z M267.70,288.36 L269.30,289.16 L270.20,290.86 L270.20,293.86 L269.30,295.56 L267.70,296.36 L266.10,295.56 L265.20,293.86 L265.20,290.86 L266.10,289.16 Z M275.00,288.36 L276.60,289.16 L277.50,290.86 L277.50,293.86 L276.60,295.56 L275.00,296.36 L273.40,295.56 L272.50,293.86 L272.50,290.86 L273.40,289.16 Z M262.90,302.92 L261.60,303.92 L259.20,303.92 L257.90,302.72 L257.90,301.12 L259.20,299.72 L261.60,299.72 L262.90,301.12 L262.90,305.32 L261.60,307.32 L260.00,307.72 L258.40,307.12 M267.70,299.72 L269.30,300.52 L270.20,302.22 L270.20,305.22 L269.30,306.92 L267.70,307.72 L266.10,306.92 L265.20,305.22 L265.20,302.22 L266.10,300.52 Z M275.00,299.72 L276.60,300.52 L277.50,302.22 L277.50,305.22 L276.60,306.92 L275.00,307.72 L273.40,306.92 L272.50,305.22 L272.50,302.22 L273.40,300.52 Z M251.30,311.48 L253.10,309.88 L253.10,317.88 M251.10,317.88 L255.10,317.88 M260.40,309.88 L262.00,310.68 L262.90,312.38 L262.90,315.38 L262.00,317.08 L260.40,317.88 L258.80,317.08 L257.90,315.38 L257.90,312.38 L258.80,310.68 Z M267.70,309.88 L269.30,310.68 L270.20,312.38 L270.20,315.38 L269.30,317.08 L267.70,317.88 L266.10,317.08 L265.20,315.38 L265.20,312.38 L266.10,310.68 Z M275.00,309.88 L276.60,310.68 L277.50,312.38 L277.50,315.38 L276.60,317.08 L275.00,317.88 L273.40,317.08 L272.50,315.38 L272.50,312.38 L273.40,310.68 Z" fill="none" stroke="#d8d8d8" stroke-width="1.0" stroke-linejoin="round"/>
<polyline points="386.5,98.7 403.8,125.0 422.7,149.7 435.9,164.5 444.1,177.7 453.3,190.0 460.7,201.5 464.8,213.0 469.0,223.8 475.9,250.0 480.8,274.7 480.7,303.0 483.3,304.3 501.3,317.0" fill="none" stroke="#ffb0b0" stroke-width="1.6"/>
<polyline points="452.4,65.0 440.0,70.7 431.8,82.2 412.0,90.5 402.1,98.7 398.8,105.3 398.8,134.9 400.5,144.8 411.2,164.5 419.4,178.5 428.5,195.0 436.8,204.8 436.8,214.7 445.9,226.2 455.0,241.0 457.4,251.0 463.5,265.6 463.5,269.0 473.4,285.4 474.0,289.7 477.3,295.0 472.0,299.7 476.0,307.0 480.0,313.0 487.3,318.3" fill="none" stroke="#ff0000" stroke-width="2.8" stroke-linejoin="round"/>
<polyline points="433.4,65.0 423.5,71.5 413.2,82.2 400.5,88.8 391.4,94.6 385.6,99.5 382.4,106.0 380.2,134.9 381.5,141.5 386.5,153.8 393.0,169.5 403.0,195.0 406.4,201.5 396.5,214.7 420.4,219.7 415.4,224.6 401.4,227.1 390.7,242.7 422.0,248.5 406.4,251.0 426.1,256.7 423.2,264.0 418.2,265.6 438.0,269.8 447.3,281.7 444.0,287.0 455.3,288.3 447.3,290.3 453.3,295.7 469.3,298.3 468.0,301.0 471.3,308.3 465.3,309.7 476.7,313.7 475.3,318.3" fill="none" stroke="#00ff00" stroke-width="2.8" stroke-linejoin="round"/>
<line x1="573.2" y1="96.4" x2="573.2" y2="321" stroke="#a89c20" stroke-width="1.5"/>
<path d="M573.2,89.3 L586.5,84.1 M586.5,84.1 L590.6,88.5 M584.6,84.8 L588.8,89.2 M582.8,85.6 L585.9,88.8 M573.2,96.4 L586.5,89.3 M586.5,89.3 L591.1,93.1 M573.2,109.0 L586.5,102.0 M586.5,102.0 L591.1,105.9 M584.7,102.9 L588.2,105.8 M573.2,114.2 L586.5,107.6 M586.5,107.6 L591.0,111.6 M584.7,108.5 L588.1,111.5 M573.2,125.4 L586.5,126.8 M586.5,126.8 L588.2,132.6 M584.5,126.6 L585.8,130.9 M573.2,129.6 L586.5,131.5 M586.5,131.5 L587.9,137.3 M584.5,131.2 L585.6,135.6 M573.2,142.8 L586.5,143.7 M586.5,143.7 L588.4,149.4 M584.5,143.6 L586.4,149.3 M582.5,143.4 L583.9,147.7 M573.2,152.6 L586.5,151.2 M586.5,151.2 L589.3,156.5 M584.5,151.4 L586.6,155.4 M573.2,174.1 L586.5,173.5 M586.5,173.5 L589.0,179.0 M573.2,178.8 L586.5,177.6 M586.5,177.6 L589.2,182.9 M584.5,177.8 L586.6,181.8 M573.2,193.5 L586.5,191.8 M586.5,191.8 L589.4,197.0 M584.5,192.1 L586.7,196.0 M573.2,200.6 L586.5,198.2 M586.5,198.2 L589.7,203.3 M584.5,198.6 L586.9,202.4 M573.2,210.6 L586.5,207.0 M586.5,207.0 L590.1,211.8 M573.2,218.5 L586.5,220.3 M586.5,220.3 L588.0,226.1 M584.5,220.0 L585.6,224.4 M573.2,223.2 L586.5,222.0 M586.5,222.0 L589.2,227.3 M584.5,222.2 L586.6,226.2 M573.2,227.4 L586.5,225.0 M586.5,225.0 L589.7,230.1 M584.5,225.4 L586.9,229.2 M573.2,243.2 L586.5,241.5 M586.5,241.5 L589.4,246.7 M584.5,241.8 L586.7,245.7 M573.2,246.2 L586.5,243.2 M586.5,243.2 L589.9,248.1 M584.5,243.6 L587.1,247.3 M573.2,259.7 L586.5,258.5 M586.5,258.5 L589.2,263.8 M584.5,258.7 L586.6,262.7 M573.2,263.2 L586.5,261.5 M586.5,261.5 L589.4,266.7 M584.5,261.8 L586.7,265.7 M573.2,262.5 L586.5,261.6 M586.5,261.6 L589.1,267.0 M573.2,265.8 L586.5,263.3 M586.5,263.3 L589.7,268.4 M573.2,274.8 L586.5,269.0 M586.5,269.0 L590.8,273.2 M573.2,280.6 L586.5,280.6 M586.5,280.6 L588.7,286.2 M573.2,285.5 L586.5,285.0 M586.5,285.0 L589.0,290.5 M584.5,285.1 L586.3,289.2 M573.2,289.7 L586.5,289.0 M586.5,289.0 L589.0,294.4 M584.5,289.1 L586.4,293.2 M573.2,293.0 L586.5,292.5 M586.5,292.5 L589.0,298.0 M584.5,292.6 L586.3,296.7 M573.2,295.4 L586.5,295.0 M586.5,295.0 L588.9,300.5 M584.5,295.1 L586.3,299.2 M573.2,297.9 L586.5,297.5 M586.5,297.5 L588.9,303.0 M584.5,297.6 L586.3,301.7 M573.2,301.2 L586.5,301.0 M586.5,301.0 L588.8,306.5 M584.5,301.0 L586.2,305.2 M573.2,304.5 L586.5,304.0 M586.5,304.0 L589.0,309.5 M584.5,304.1 L586.3,308.2 M573.2,307.8 L586.5,307.5 M586.5,307.5 L588.9,313.0 M584.5,307.5 L586.3,311.7 M573.2,310.2 L586.5,310.0 M586.5,310.0 L588.8,315.5 M584.5,310.0 L586.2,314.2 M573.2,312.7 L586.5,312.5 M586.5,312.5 L588.8,318.0 M584.5,312.5 L586.2,316.7 M573.2,315.2 L586.5,315.0 M586.5,315.0 L588.8,320.5 M584.5,315.0 L586.2,319.2 M573.2,316.8 L586.5,316.5 M586.5,316.5 L588.9,322.0 M584.5,316.5 L586.3,320.7 M573.2,318.5 L586.5,318.0 M586.5,318.0 L589.0,323.5 M584.5,318.1 L586.3,322.2" fill="none" stroke="#e4e4e4" stroke-width="0.9"/>
</svg>
 <!-- bottom controls -->
 <div class="b95" style="left:16.8px;top:364.4px;font-size:9px">Soundings:</div>
 <div class="combo" style="left:69px;top:360px;width:147px;height:20px"><div class="ci"></div></div>
 <div class="b95" style="left:72.5px;top:364px">72201 2005-07-07 12:00:00Z</div>
 <div class="arrow" style="left:203px;top:367px"></div>
 <div class="cb" style="left:239px;top:364px"></div>
 <div class="b95" style="left:251.5px;top:362.3px">Parcel Path</div>
 <div class="cb" style="left:239px;top:382px"></div>
 <div class="b95" style="left:251.5px;top:381.3px">Virtual Temperature</div>
 <div class="cb" style="left:239px;top:401px"></div>
 <div class="b95" style="left:251.5px;top:399.8px">Stations</div>
 <svg class="abs" style="left:240px;top:365px" width="9" height="9"><path d="M1.8 3.8 L3.4 6.3 L6.8 2" stroke="#000" stroke-width="1.7" fill="none"/></svg>
 <svg class="abs" style="left:240px;top:402px" width="9" height="9"><path d="M1.8 3.8 L3.4 6.3 L6.8 2" stroke="#000" stroke-width="1.7" fill="none"/></svg>
 <div class="b95" style="left:359.8px;top:364px">Parcel mode:</div>
 <div class="combo" style="left:425px;top:360px;width:127px;height:20px"><div class="ci"></div></div>
 <div class="b95" style="left:429px;top:364px">At Cursor (Press,Temp)</div>
 <div class="arrow" style="left:539.5px;top:367px"></div>
 <div class="b95" style="left:355.7px;top:390px">Wind spacing:</div>
 <div class="combo" style="left:425px;top:385.6px;width:127px;height:19.6px"><div class="ci"></div></div>
 <div class="b95" style="left:429px;top:390px">All</div>
 <div class="arrow" style="left:539.5px;top:393px"></div>
 <div class="b95" style="left:557.5px;top:390px">(hPa)</div>
</div>
</body></html>
